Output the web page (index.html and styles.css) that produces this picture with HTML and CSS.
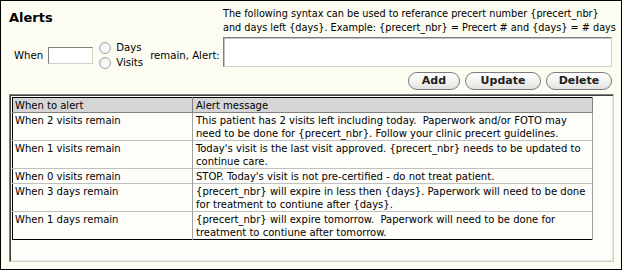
FILE: index.html
```html
<!DOCTYPE html>
<html>
<head>
<meta charset="utf-8">
<link rel="stylesheet" href="styles.css">
</head>
<body>
<div class="page">
  <div class="top">
    <div class="left">
      <div class="title">Alerts</div>
      <div class="when-row">
        <span class="lbl-when">When</span>
        <input class="num-input" type="text">
        <div class="radios">
          <label class="radio-line"><input type="radio" name="unit" class="radio"><span>Days</span></label>
          <label class="radio-line"><input type="radio" name="unit" class="radio"><span>Visits</span></label>
        </div>
        <span class="lbl-remain">remain, Alert:</span>
      </div>
    </div>
    <div class="right">
      <div class="syntax">The following syntax can be used to referance precert number {precert_nbr}<br>and days left {days}. Example: {precert_nbr} = Precert # and {days} = # days</div>
      <textarea class="msg"></textarea>
      <div class="buttons">
        <button class="btn btn-add">Add</button>
        <button class="btn btn-update">Update</button>
        <button class="btn btn-delete">Delete</button>
      </div>
    </div>
  </div>
  <div class="grid-box">
    <table class="grid">
      <colgroup><col class="col1"><col class="col2"></colgroup>
      <thead>
        <tr><th>When to alert</th><th>Alert message</th></tr>
      </thead>
      <tbody>
        <tr><td>When 2 visits remain</td><td>This patient has 2 visits left including today.&nbsp; Paperwork and/or FOTO may<br>need to be done for {precert_nbr}. Follow your clinic precert guidelines.</td></tr>
        <tr><td>When 1 visits remain</td><td>Today's visit is the last visit approved. {precert_nbr} needs to be updated to<br>continue care.</td></tr>
        <tr><td>When 0 visits remain</td><td>STOP. Today's visit is not pre-certified - do not treat patient.</td></tr>
        <tr><td>When 3 days remain</td><td>{precert_nbr} will expire in less then {days}. Paperwork will need to be done<br>for treatment to contiune after {days}.</td></tr>
        <tr><td>When 1 days remain</td><td>{precert_nbr} will expire tomorrow.&nbsp; Paperwork will need to be done for<br>treatment to contiune after tomorrow.</td></tr>
      </tbody>
    </table>
  </div>
</div>
</body>
</html>
```
FILE: styles.css
```css
html, body {
  margin: 0;
  padding: 0;
}
body {
  font-family: Tahoma, "DejaVu Sans Condensed", "Liberation Sans", sans-serif;
  font-size: 11px;
  color: #000;
  background: #fcfcf2;
}
.page {
  box-sizing: border-box;
  width: 622px;
  height: 270px;
  border: 1px solid #000;
  background: #fcfcf2;
}
.top {
  display: flex;
}
.left {
  width: 214px;
  padding-left: 8px;
}
.title {
  margin-top: 9px;
  font-size: 13px;
  font-weight: bold;
  line-height: 16px;
  font-family: Tahoma, "DejaVu Sans", "Liberation Sans", sans-serif;
}
.when-row {
  display: flex;
  align-items: center;
  margin-top: 14px;
  margin-left: 5px;
  font-size: 11.3px;
}
.lbl-when {
  margin-right: 5px;
}
.num-input {
  box-sizing: border-box;
  width: 45px;
  height: 17px;
  margin: 0;
  padding: 0 2px;
  border: 1px solid #d4d0c8;
  border-top-color: #7f7f7f;
  border-left-color: #7f7f7f;
  background: #fff;
  font: inherit;
}
.radios {
  display: flex;
  flex-direction: column;
  margin-left: 6px;
}
.radio-line {
  display: flex;
  align-items: center;
  height: 15px;
}
.radio {
  appearance: none;
  -webkit-appearance: none;
  box-sizing: border-box;
  width: 12px;
  height: 12px;
  margin: 0 5px 0 0;
  border: 1px solid #a8a8a8;
  border-radius: 50%;
  background: radial-gradient(circle at 60% 60%, #ffffff 0%, #f4f4f4 50%, #d8d8d8 100%);
}
.lbl-remain {
  margin-left: 7px;
}
.right {
  width: 389px;
}
.syntax {
  margin-top: 6px;
  line-height: 14px;
  font-size: 10.8px;
  white-space: nowrap;
}
.msg {
  display: block;
  box-sizing: border-box;
  width: 389px;
  height: 30px;
  margin: 2px 0 0 0;
  padding: 1px 2px;
  border: 1px solid #d4d0c8;
  border-top-color: #7f7f7f;
  border-left-color: #7f7f7f;
  box-shadow: inset 1px 1px 0 #c0c0c0;
  background: #fff;
  resize: none;
  font: inherit;
}
.buttons {
  display: flex;
  justify-content: flex-end;
  gap: 5px;
  margin-top: 5px;
}
.btn {
  box-sizing: border-box;
  height: 18px;
  margin: 0;
  padding: 0;
  border: 1px solid #7a7a7a;
  border-radius: 9px;
  background: linear-gradient(#ffffff, #f0f0ee 60%, #e0e0dc);
  font-family: Tahoma, "DejaVu Sans", "Liberation Sans", sans-serif;
  font-size: 11px;
  font-weight: bold;
  color: #202020;
  line-height: 16px;
}
.btn-add { width: 52px; }
.btn-update { width: 76px; }
.btn-delete { width: 66px; }
.grid-box {
  box-sizing: border-box;
  width: 605px;
  height: 168px;
  margin: 4px 0 0 8px;
  border: 1px solid;
  border-color: #808080 #d4d0c8 #d4d0c8 #808080;
  box-shadow: inset 1px 1px 0 #404040, inset -1px -1px 0 #e8e8e0;
  background: #fdfdfa;
  padding: 2px 0 0 2px;
}
.grid {
  border-collapse: collapse;
  table-layout: fixed;
  width: 580px;
  border: 1px solid #000;
  background: #fdfdfa;
  font-size: 11.15px;
}
.col1 { width: 180px; }
.col2 { width: 400px; }
.grid th, .grid td {
  text-align: left;
  vertical-align: top;
  font-weight: normal;
  padding: 1px 3px 0 2px;
  line-height: 13px;
  white-space: nowrap;
}
.grid th {
  background: #d6d6d6;
  border-bottom: 1px solid #808080;
  border-right: 1px solid #808080;
}
.grid td {
  border-top: 1px solid #c0c0c0;
  border-right: 1px solid #a0a0a0;
}
.grid td + td,
.grid th + th {
  padding-left: 3px;
}
```
